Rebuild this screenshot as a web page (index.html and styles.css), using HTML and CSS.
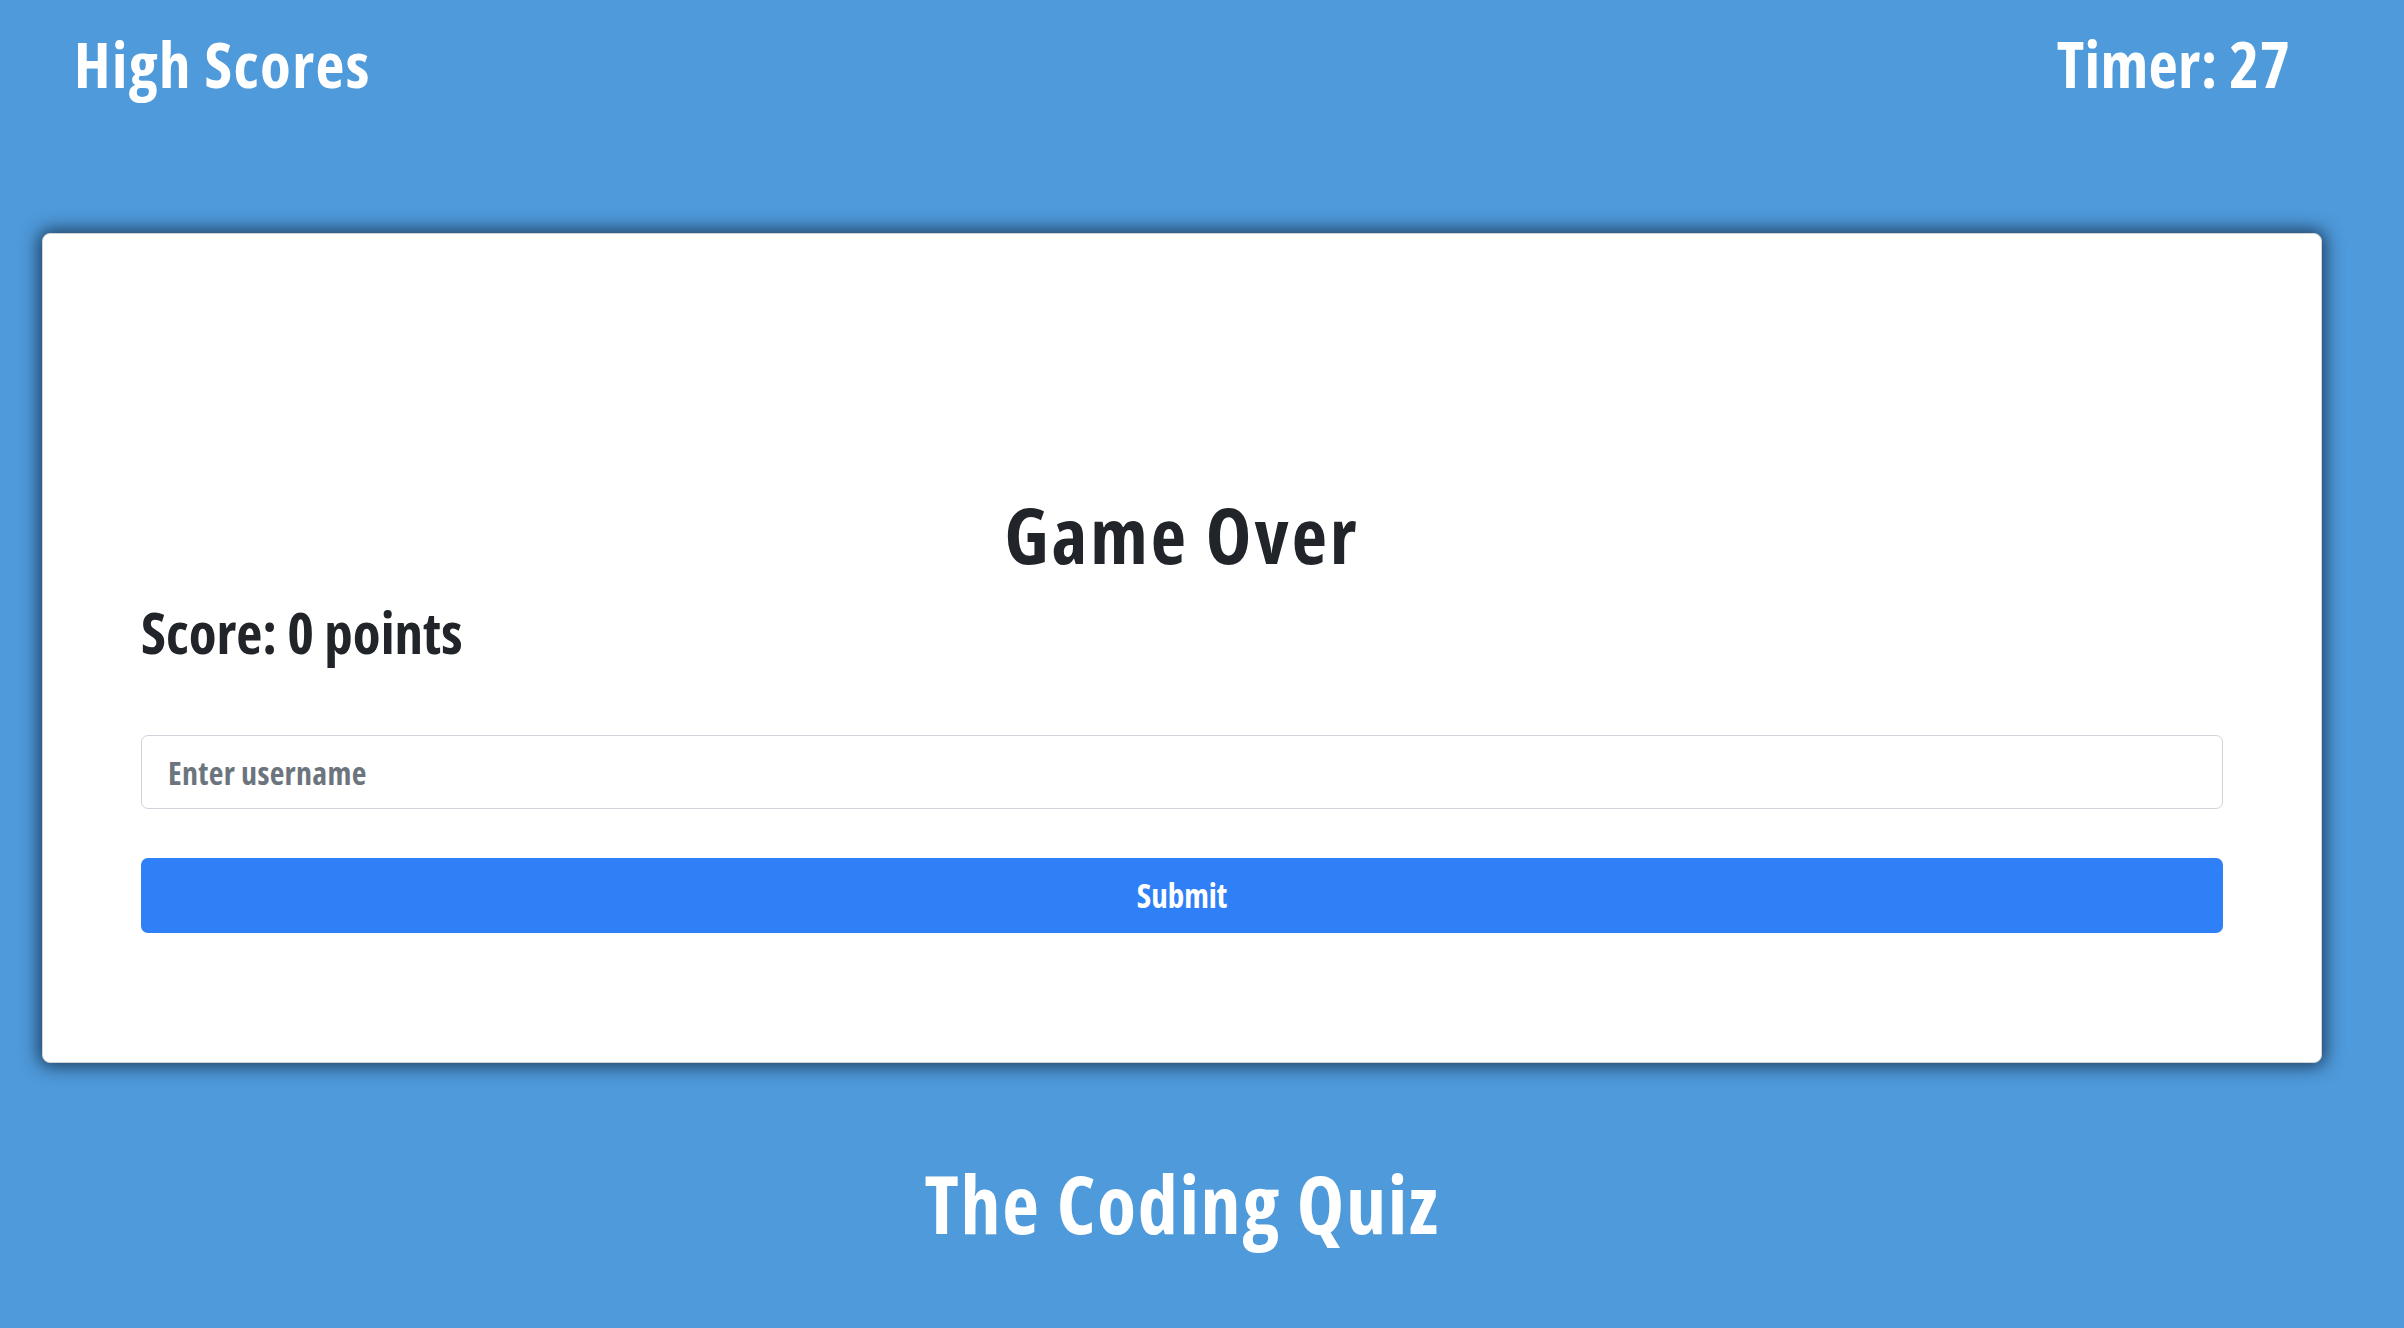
FILE: index.html
```html
<!DOCTYPE html>
<html lang="en">
<head>
<meta charset="utf-8">
<title>The Coding Quiz</title>
<link rel="stylesheet" href="styles.css">
</head>
<body>
<header class="topbar">
  <a class="highscores" href="#">High Scores</a>
  <div class="timer">Timer: 27</div>
</header>
<main class="wrap">
  <section class="card">
    <h1 class="card-title">Game Over</h1>
    <h2 class="score">Score: 0 points</h2>
    <form class="form">
      <input class="field" type="text" placeholder="Enter username">
      <button class="btn" type="button">Submit</button>
    </form>
  </section>
  <footer class="footer">The Coding Quiz</footer>
</main>
</body>
</html>
```
FILE: styles.css
```css
html, body {
  margin: 0;
  padding: 0;
}
body {
  background: #4f9adb;
  font-family: "Open Sans", "Liberation Sans", Arial, sans-serif;
  font-stretch: 75%;
  font-weight: 700;
  color: #212529;
  min-height: 1328px;
}
.topbar {
  display: flex;
  justify-content: space-between;
  align-items: baseline;
  padding: 26px 114px 0 77px;
  height: 233px;
  box-sizing: border-box;
}
.highscores {
  color: #fff;
  text-decoration: none;
  font-size: 63px;
  line-height: 76px;
  letter-spacing: 1.4px;
  margin-left: -3px;
}
.timer {
  color: #fff;
  font-size: 64px;
  line-height: 76px;
  letter-spacing: 0.3px;
}
.wrap {
  margin: 0 82px 0 42px;
  display: flex;
  flex-direction: column;
}
.card {
  background: #fff;
  border: 1px solid #d3d3d3;
  border-radius: 8px;
  box-shadow: 0 0 18px 3px rgba(10, 25, 45, 0.75);
  padding: 255px 98px 129px 98px;
  display: flex;
  flex-direction: column;
}
.card-title {
  margin: 0;
  text-align: center;
  font-size: 77px;
  line-height: 92px;
  font-weight: 700;
  letter-spacing: 3px;
}
.score {
  margin: 17px 0 0 0;
  font-size: 57px;
  line-height: 68px;
  font-weight: 700;
}
.form {
  margin-top: 69px;
  display: flex;
  flex-direction: column;
  gap: 49px;
}
.field {
  height: 74px;
  box-sizing: border-box;
  border: 1.5px solid #ced4da;
  border-radius: 7px;
  padding: 0 26px;
  font-family: inherit;
  font-stretch: inherit;
  font-weight: 700;
  font-size: 32px;
  letter-spacing: 0.3px;
  color: #212529;
  outline: none;
}
.field::placeholder {
  color: #6c757d;
}
.btn {
  height: 75px;
  border: none;
  border-radius: 7px;
  background: #2f7ff6;
  color: #fff;
  font-family: inherit;
  font-stretch: inherit;
  font-weight: 700;
  font-size: 33px;
}
.footer {
  margin-top: 92px;
  text-align: center;
  color: #fff;
  font-size: 80px;
  line-height: 96px;
  letter-spacing: 1.7px;
}
```
